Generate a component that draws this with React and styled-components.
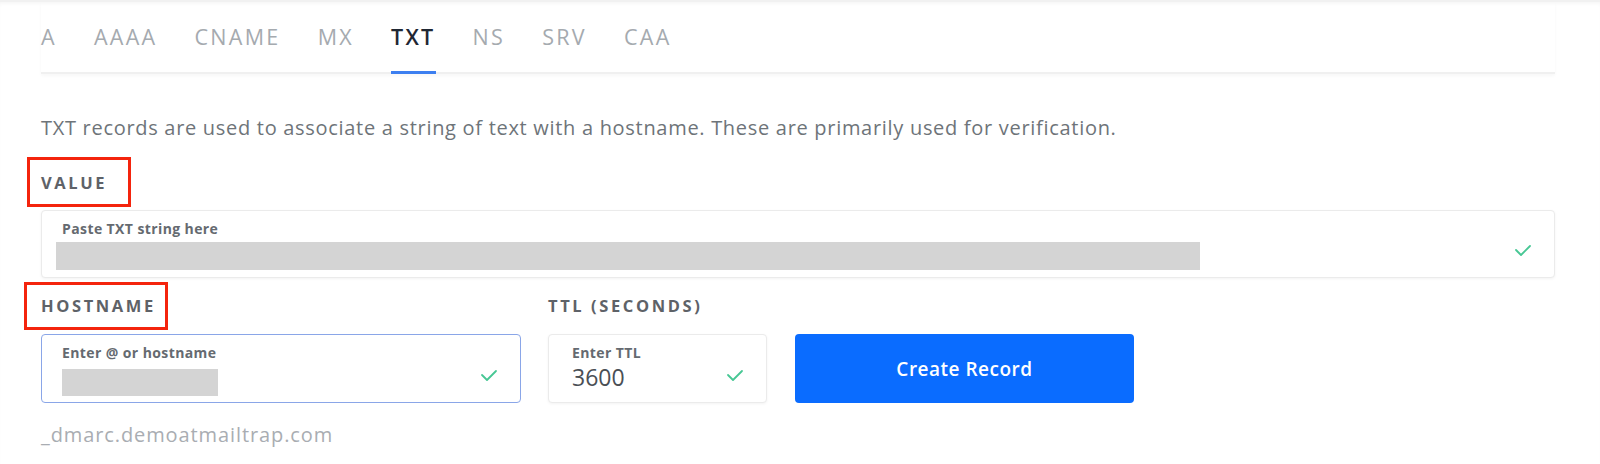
import React, { useState } from 'react';
import styled, { createGlobalStyle } from 'styled-components';

const GlobalStyle = createGlobalStyle`
  html, body {
    margin: 0;
    padding: 0;
    background: #fff;
  }
  body {
    font-family: 'Open Sans', Lato, 'Liberation Sans', sans-serif;
    -webkit-font-smoothing: antialiased;
  }
`;

const Page = styled.div`
  width: 1600px;
  height: 464px;
  overflow: hidden;
  box-sizing: border-box;
  border-top: 2px solid #f1f1f1;
  box-shadow: inset 0 3px 4px -2px rgba(0, 0, 0, 0.05);
  padding: 0 45px 0 41px;
`;

const TabBar = styled.div`
  display: flex;
  gap: 37px;
  height: 70px;
  border-bottom: 2px solid #f0f0f0;
  box-shadow: 0 2px 3px rgba(0, 0, 0, 0.03);
`;

const Tab = styled.div`
  display: flex;
  align-items: center;
  padding-bottom: 1px;
  font-size: 21.5px;
  letter-spacing: 2.3px;
  color: ${(p) => (p.$active ? '#1f2733' : '#a5aaaf')};
  font-weight: ${(p) => (p.$active ? 600 : 400)};
  cursor: pointer;
  border-bottom: 3px solid ${(p) => (p.$active ? '#3d7ff0' : 'transparent')};
  margin-bottom: -2px;
`;

const Description = styled.p`
  margin: 42px 0 0;
  font-size: 20px;
  letter-spacing: 0.7px;
  color: #6e7479;
  line-height: 24px;
`;

const Label = styled.div`
  position: relative;
  align-self: flex-start;
  display: inline-block;
  font-size: 16.5px;
  font-weight: 700;
  letter-spacing: 2.6px;
  color: #5e6268;
  line-height: 20px;
  &::after {
    content: '';
    position: absolute;
    pointer-events: none;
    border: 3px solid #f4240d;
    top: ${(p) => p.$box?.[0]}px;
    right: ${(p) => p.$box?.[1]}px;
    bottom: ${(p) => p.$box?.[2]}px;
    left: ${(p) => p.$box?.[3]}px;
    display: ${(p) => (p.$box ? 'block' : 'none')};
  }
`;

const ValueLabelRow = styled.div`
  margin-top: 32px;
`;

const Field = styled.div`
  box-sizing: border-box;
  height: ${(p) => p.$height || 69}px;
  width: ${(p) => (p.$width ? `${p.$width}px` : '100%')};
  border: 1px solid ${(p) => (p.$focused ? '#8aa6e8' : '#ebebeb')};
  border-radius: 4px;
  background: #fff;
  box-shadow: ${(p) =>
    p.$focused ? 'none' : '0 1px 3px rgba(0, 0, 0, 0.05)'};
  display: flex;
  align-items: flex-start;
  padding: 10px ${(p) => p.$right || 22}px 0 ${(p) => p.$left || 20}px;
`;

const FieldBody = styled.div`
  flex: 1;
  display: flex;
  flex-direction: column;
  min-width: 0;
`;

const FieldCaption = styled.div`
  font-size: 14px;
  font-weight: 700;
  letter-spacing: 0.4px;
  color: #656a70;
  line-height: 16px;
`;

const Redacted = styled.div`
  height: ${(p) => p.$height || 28}px;
  width: ${(p) => p.$width}px;
  margin-left: ${(p) => p.$shift || 0}px;
  margin-top: ${(p) => p.$top || 4}px;
  background: #d4d4d4;
`;

const FieldValue = styled.div`
  font-size: 23px;
  color: #4a4f55;
  line-height: 28px;
  margin-top: 2px;
`;

const Check = styled.svg`
  flex-shrink: 0;
  align-self: center;
  width: 18px;
  height: 14px;
  margin-top: ${(p) => p.$top || 0}px;
`;

const ValueBlock = styled.div`
  margin-top: 16px;
`;

const FormRow = styled.div`
  display: flex;
  gap: 27px;
  margin-top: 18px;
`;

const Column = styled.div`
  display: flex;
  flex-direction: column;
  gap: 18px;
`;

const CreateButton = styled.button`
  align-self: flex-end;
  width: 339px;
  height: 69px;
  margin-left: 1px;
  border: none;
  border-radius: 4px;
  background: #0a6cff;
  color: #fff;
  font-family: inherit;
  font-size: 19px;
  letter-spacing: 0.5px;
  font-weight: 600;
  cursor: pointer;
`;

const Hint = styled.div`
  margin-top: 20px;
  font-size: 20px;
  letter-spacing: 0.9px;
  line-height: 24px;
  color: #a9adb2;
`;

const CheckIcon = ({ top }) => (
  <Check viewBox="0 0 18 14" $top={top}>
    <polyline
      points="2,7 7,12 16,3"
      fill="none"
      stroke="#47c794"
      strokeWidth="1.8"
      strokeLinecap="round"
      strokeLinejoin="round"
    />
  </Check>
);

const tabs = ['A', 'AAAA', 'CNAME', 'MX', 'TXT', 'NS', 'SRV', 'CAA'];

export default function App() {
  const [active, setActive] = useState('TXT');

  return (
    <>
      <GlobalStyle />
      <Page>
        <TabBar>
          {tabs.map((t) => (
            <Tab key={t} $active={t === active} onClick={() => setActive(t)}>
              {t}
            </Tab>
          ))}
        </TabBar>

        <Description>
          TXT records are used to associate a string of text with a hostname.
          These are primarily used for verification.
        </Description>

        <ValueLabelRow>
          <Label $box={[-16, -24, -14, -14]}>VALUE</Label>
        </ValueLabelRow>

        <ValueBlock>
          <Field $height={68}>
            <FieldBody>
              <FieldCaption>Paste TXT string here</FieldCaption>
              <Redacted $width={1144} $shift={-6} $top={5} />
            </FieldBody>
            <CheckIcon top={2} />
          </Field>
        </ValueBlock>

        <FormRow>
          <Column>
            <Label $box={[-14, -12, -14, -17]}>HOSTNAME</Label>
            <Field $width={480} $focused>
              <FieldBody>
                <FieldCaption>Enter @ or hostname</FieldCaption>
                <Redacted $width={156} $height={27} $top={8} />
              </FieldBody>
              <CheckIcon top={2} />
            </Field>
          </Column>
          <Column>
            <Label>TTL (SECONDS)</Label>
            <Field $width={219} $left={23}>
              <FieldBody>
                <FieldCaption>Enter TTL</FieldCaption>
                <FieldValue>3600</FieldValue>
              </FieldBody>
              <CheckIcon top={2} />
            </Field>
          </Column>
          <CreateButton>Create Record</CreateButton>
        </FormRow>

        <Hint>_dmarc.demoatmailtrap.com</Hint>
      </Page>
    </>
  );
}
